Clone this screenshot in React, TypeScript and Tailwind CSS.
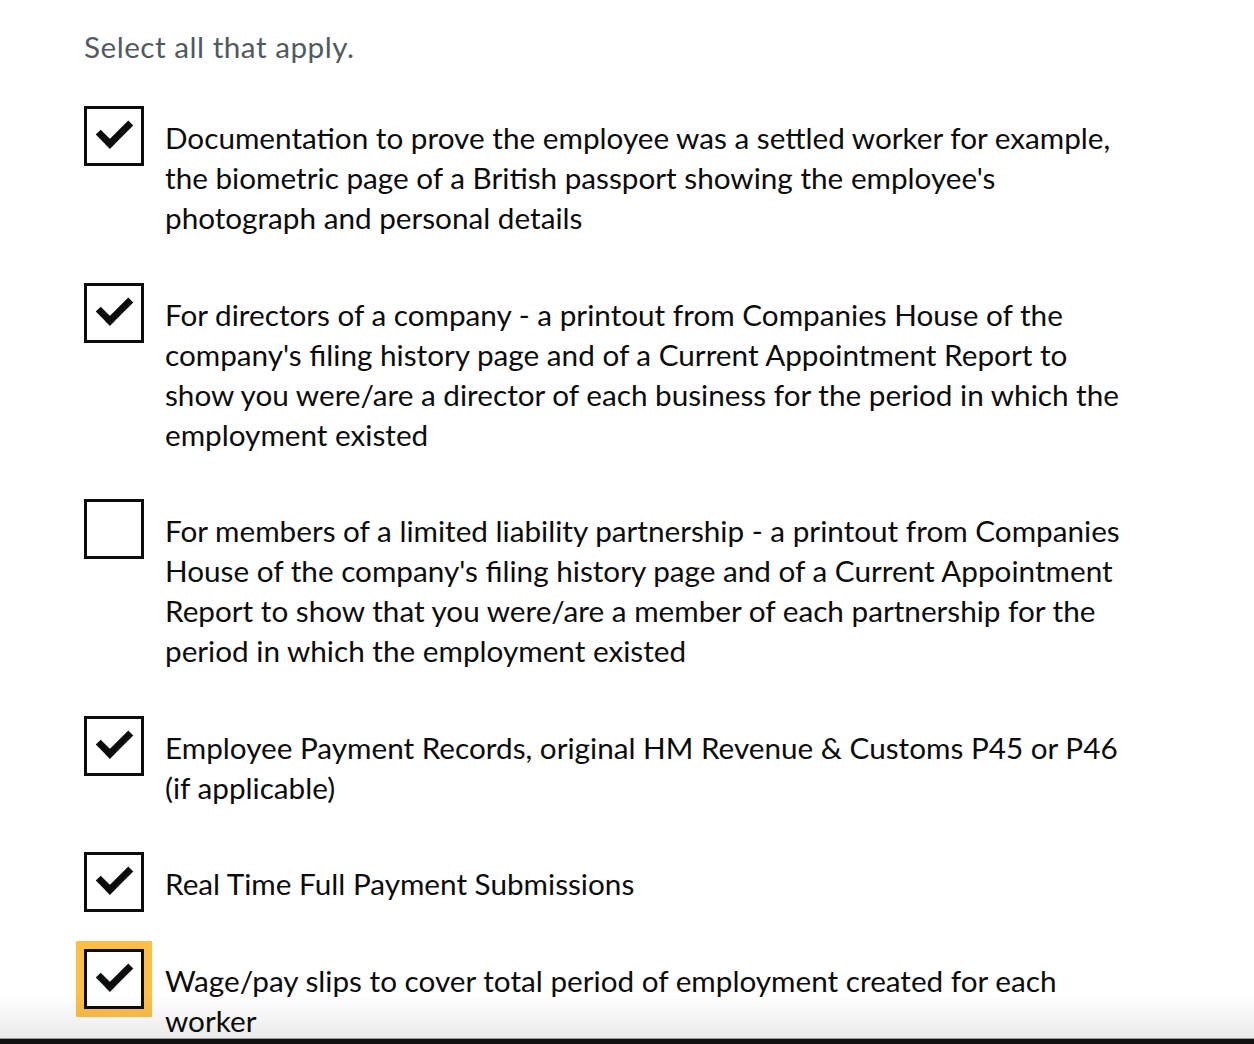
type Option = {
  id: string;
  label: string;
  checked: boolean;
  focused?: boolean;
};

const options: Option[] = [
  {
    id: "settled-worker",
    label:
      "Documentation to prove the employee was a settled worker for example, the biometric page of a British passport showing the employee's photograph and personal details",
    checked: true,
  },
  {
    id: "directors",
    label:
      "For directors of a company - a printout from Companies House of the company's filing history page and of a Current Appointment Report to show you were/are a director of each business for the period in which the employment existed",
    checked: true,
  },
  {
    id: "llp-members",
    label:
      "For members of a limited liability partnership - a printout from Companies House of the company's filing history page and of a Current Appointment Report to show that you were/are a member of each partnership for the period in which the employment existed",
    checked: false,
  },
  {
    id: "payment-records",
    label: "Employee Payment Records, original HM Revenue & Customs P45 or P46 (if applicable)",
    checked: true,
  },
  {
    id: "rti",
    label: "Real Time Full Payment Submissions",
    checked: true,
  },
  {
    id: "payslips",
    label: "Wage/pay slips to cover total period of employment created for each worker",
    checked: true,
    focused: true,
  },
];

const Checkbox = ({ checked, focused }: { checked: boolean; focused?: boolean }) => (
  <span
    className={`relative shrink-0 w-[60px] h-[60px] border-[3px] border-[#0b0c0c] bg-white ${
      focused ? "shadow-[0_0_0_8px_#ffbf47]" : ""
    }`}
  >
    {checked && (
      <span className="absolute left-[11px] top-[11px] w-[26px] h-[13px] box-content border-b-[7px] border-l-[7px] border-[#0b0c0c] -rotate-45" />
    )}
  </span>
);

export default function App() {
  return (
    <div className="relative min-h-[1044px] bg-white pl-[84px] pt-[27px] font-['Lato',sans-serif] text-[29.7px] leading-[40px] text-[#0b0c0c]">
      <p className="text-[#505a5f] tracking-[0.5px]">Select all that apply.</p>

      <div className="mt-[39px] flex flex-col gap-9">
        {options.map((option) => (
          <label key={option.id} className="flex items-start gap-[21px] cursor-pointer">
            <Checkbox checked={option.checked} focused={option.focused} />
            <span className="w-[972px] pt-3 pb-[8.5px]">{option.label}</span>
          </label>
        ))}
      </div>

      {/* bottom edge of the window */}
      <div className="pointer-events-none fixed inset-x-0 bottom-0">
        <div className="h-[44px] bg-gradient-to-b from-transparent to-black/[0.08]" />
        <div className="h-px bg-[#9a9a9a]" />
        <div className="h-[5px] bg-[#111]" />
      </div>
    </div>
  );
}
